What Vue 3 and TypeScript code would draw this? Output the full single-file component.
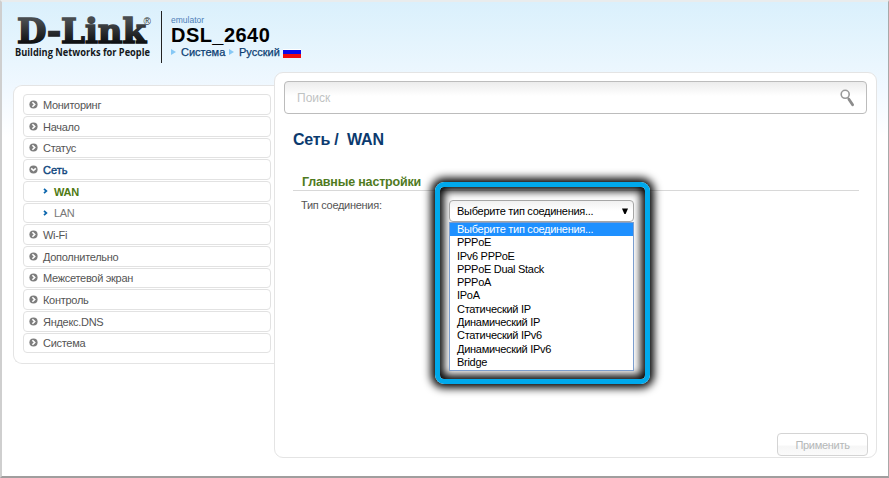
<script setup lang="ts">
interface MenuItem {
  label: string
  open?: boolean
  sub?: boolean
  current?: boolean
}

const menu: MenuItem[] = [
  { label: 'Мониторинг' },
  { label: 'Начало' },
  { label: 'Статус' },
  { label: 'Сеть', open: true },
  { label: 'WAN', sub: true, current: true },
  { label: 'LAN', sub: true },
  { label: 'Wi-Fi' },
  { label: 'Дополнительно' },
  { label: 'Межсетевой экран' },
  { label: 'Контроль' },
  { label: 'Яндекс.DNS' },
  { label: 'Система' },
]

const options: string[] = [
  'Выберите тип соединения...',
  'PPPoE',
  'IPv6 PPPoE',
  'PPPoE Dual Stack',
  'PPPoA',
  'IPoA',
  'Статический IP',
  'Динамический IP',
  'Статический IPv6',
  'Динамический IPv6',
  'Bridge',
]
</script>

<template>
  <div class="page">
    <header class="header">
      <svg class="logo" width="140" height="48" viewBox="0 0 140 48">
        <defs>
          <linearGradient id="ink" x1="0" y1="0" x2="0" y2="1">
            <stop offset="0.2" stop-color="#484c4f" />
            <stop offset="0.8" stop-color="#0c0e10" />
          </linearGradient>
        </defs>
        <text class="brand" x="3" y="31.3" textLength="129" lengthAdjust="spacingAndGlyphs">D-Link</text>
        <text class="reg" x="129.5" y="12.5">®</text>
        <text class="tagline" x="1" y="43.7" textLength="135" lengthAdjust="spacingAndGlyphs">Building Networks for People</text>
      </svg>
      <div class="device">
        <div class="mode">emulator</div>
        <div class="model">DSL_2640</div>
        <nav class="crumbs">
          <i class="tri"></i><span class="c1">Система</span>
          <i class="tri"></i><span class="c2">Русский</span>
          <svg class="flag" width="18" height="9" viewBox="0 0 18 9">
            <rect width="18" height="3" y="0" fill="#fff" />
            <rect width="18" height="4" y="1" fill="#0a0ae8" />
            <rect width="18" height="4" y="5" fill="#f00c0c" />
          </svg>
        </nav>
      </div>
    </header>

    <div class="body">
      <aside class="sidebar">
        <div
          v-for="item in menu"
          :key="item.label"
          class="item"
          :class="{ sub: item.sub, open: item.open, current: item.current }"
        >
          <svg v-if="item.sub" class="chev" width="5" height="6" viewBox="0 0 5 6">
            <path d="M1 .8 3.4 3 1 5.2" fill="none" stroke="#0b66ad" stroke-width="1.7" />
          </svg>
          <svg v-else class="bullet" width="9" height="9" viewBox="0 0 9 9">
            <circle cx="4.5" cy="4.5" r="4.1" fill="#7d7d7d" />
            <path v-if="item.open" d="M2.2 3.3 4.5 5.5 6.8 3.3" fill="none" stroke="#fff" stroke-width="1.6" />
            <path v-else d="M3.4 2.2 5.7 4.5 3.4 6.8" fill="none" stroke="#fff" stroke-width="1.6" />
          </svg>
          <span>{{ item.label }}</span>
        </div>
      </aside>

      <main class="panel">
        <div class="search">
          <span>Поиск</span>
          <svg width="15" height="18" viewBox="0 0 15 18">
            <circle cx="5.2" cy="5.3" r="4" fill="#fff" stroke="#999" stroke-width="1.6" />
            <path d="M8 8.6 9 10" stroke="#999" stroke-width="1.5" />
            <path d="M8.9 10.2 12.6 15.8" stroke="#8c8c8c" stroke-width="2.8" stroke-linecap="round" />
          </svg>
        </div>
        <h1>Сеть /&nbsp; WAN</h1>
        <h2><span>Главные настройки</span></h2>
        <div class="row">Тип соединения:</div>
        <div class="actions"><button class="apply" type="button">Применить</button></div>

        <div class="highlight">
          <div class="select">
            <span>{{ options[0] }}</span>
            <svg width="6" height="6" viewBox="0 0 6 6"><path d="M0 .5H6L3.6 6H2.4Z" fill="#000" /></svg>
          </div>
          <div class="list">
            <div v-for="(option, i) in options" :key="option" class="option" :class="{ selected: i === 0 }">
              {{ option }}
            </div>
          </div>
        </div>
      </main>
    </div>
  </div>
</template>

<style>
body {
  overflow: hidden;
}
</style>

<style scoped>
* {
  box-sizing: border-box;
}
.page {
  width: 889px;
  height: 478px;
  border-style: solid;
  border-width: 2px 1px 2px 2px;
  border-color: #e9eced #a8a8a8 #a09e9e #cfcfcf;
  background: linear-gradient(#daf0fc 0, #e4f4fd 40px, #f0f8ff 85px, #fff 135px);
  font-family: 'Liberation Sans', Arial, sans-serif;
  font-size: 11px;
  letter-spacing: -0.29px;
  color: #555;
  white-space: nowrap;
}
.header {
  display: flex;
  height: 70px;
  padding: 9px 0 0 12px;
  letter-spacing: 0;
}
.logo {
  display: block;
  margin-top: 1px;
  overflow: visible;
}
.brand {
  font: bold 33.5px 'DejaVu Serif', serif;
  fill: url(#ink);
  stroke: url(#ink);
  stroke-width: 1.6px;
}
.reg {
  font: 10px 'Liberation Sans', sans-serif;
  fill: #333;
}
.tagline {
  font: bold 10px 'Open Sans', sans-serif;
  fill: #14181b;
}
.device {
  height: 52px;
  margin-left: 7px;
  padding-left: 9px;
  border-left: 1px solid #222;
}
.mode {
  height: 13px;
  padding-top: 5px;
  font-size: 8.5px;
  line-height: 9px;
  color: #4d80b8;
}
.model {
  height: 21px;
  font-size: 20px;
  letter-spacing: 0.45px;
  font-weight: bold;
  line-height: 22px;
  color: #000;
}
.crumbs {
  display: flex;
  align-items: center;
  height: 14px;
  color: #0b3e73;
  font-size: 11px;
  -webkit-text-stroke: 0.25px #0b3e73;
}
.c1 {
  width: 44px;
  margin: 0 4px 0 5px;
}
.c2 {
  width: 42px;
  margin-left: 5px;
}
.tri {
  border: solid transparent;
  border-width: 3px 0 3px 5px;
  border-left-color: #86c8f5;
}
.flag {
  margin: 3px 0 0 2px;
}
.body {
  display: flex;
  align-items: flex-start;
  padding-left: 11px;
}
.sidebar {
  width: 261px;
  height: 279px;
  margin-top: 13px;
  padding: 8.3px 3px 0 9px;
  border: 1px solid #e4e4e4;
  border-right: 0;
  border-radius: 9px 0 0 9px;
  background: #fff;
}
.item {
  display: flex;
  align-items: center;
  height: 20.6px;
  margin-bottom: 1.08px;
  padding-left: 5px;
  border: 1px solid #e2e2e2;
  border-radius: 4px;
  background: #fff;
}
.item span {
  margin-left: 5px;
  padding-top: 1px;
}
.sub {
  padding-left: 19px;
  color: #777;
}
.sub span {
  margin-left: 6px;
}
.open {
  color: #10477e;
  letter-spacing: 0;
  -webkit-text-stroke: 0.4px #10477e;
}
.current {
  color: #4f7a13;
  font-weight: bold;
}
.panel {
  position: relative;
  display: flex;
  flex-direction: column;
  width: 603px;
  height: 386px;
  padding: 8px 9px 0 9px;
  border: 1px solid #e4e4e4;
  border-radius: 9px;
  background: #fff;
}
.search {
  display: flex;
  align-items: center;
  justify-content: space-between;
  height: 33px;
  padding: 0 11px 0 12px;
  border: 1px solid #bcbcbc;
  border-radius: 4px;
  background: linear-gradient(#ececec, #fff 45%);
  font-size: 12px;
  letter-spacing: 0;
  color: #bfc3c3;
}
h1 {
  margin: 16px 0 0 9px;
  font-size: 16px;
  letter-spacing: -0.2px;
  line-height: 20px;
  color: #0b3a6e;
}
h2 {
  height: 17px;
  margin: 24px 8px 0 9px;
  padding-left: 9px;
  border-bottom: 1px solid #d8d8d8;
  font-size: 12.5px;
  letter-spacing: -0.18px;
  line-height: 17px;
  color: #4f7a1e;
}
.row {
  margin: 7px 0 0 17px;
  line-height: 15px;
}
.actions {
  display: flex;
  justify-content: flex-end;
  margin: auto -1px 1px 0;
}
.apply {
  width: 91px;
  height: 23px;
  padding: 0;
  border: 1px solid #d4d4d4;
  border-radius: 4px;
  background: linear-gradient(#fff 50%, #f6f6f6 60%, #fbfbfb);
  font: 11px 'Liberation Sans', Arial, sans-serif;
  letter-spacing: -0.3px;
  color: #b5b8b8;
}
.highlight {
  position: absolute;
  left: 160px;
  top: 109px;
  width: 215px;
  height: 202px;
  padding: 13px 11px 0 9px;
  border: 5px solid #00a9ec;
  border-radius: 9px;
  box-shadow: 0 0 8px 4px #000, inset 0 0 8px 4px #000;
  color: #000;
}
.select {
  display: flex;
  align-items: center;
  justify-content: space-between;
  height: 22px;
  padding: 0 5px 0 7px;
  border: 1px solid #a6a6a6;
  border-radius: 4px;
  background: linear-gradient(#f0f0f0, #fff 50%);
}
.list {
  height: 149px;
  border: 1px solid #7b9dce;
  background: #fff;
}
.option {
  height: 13.3px;
  padding-left: 7px;
  line-height: 12.6px;
}
.selected {
  background: #1e90ff;
  color: #fff;
}
</style>
